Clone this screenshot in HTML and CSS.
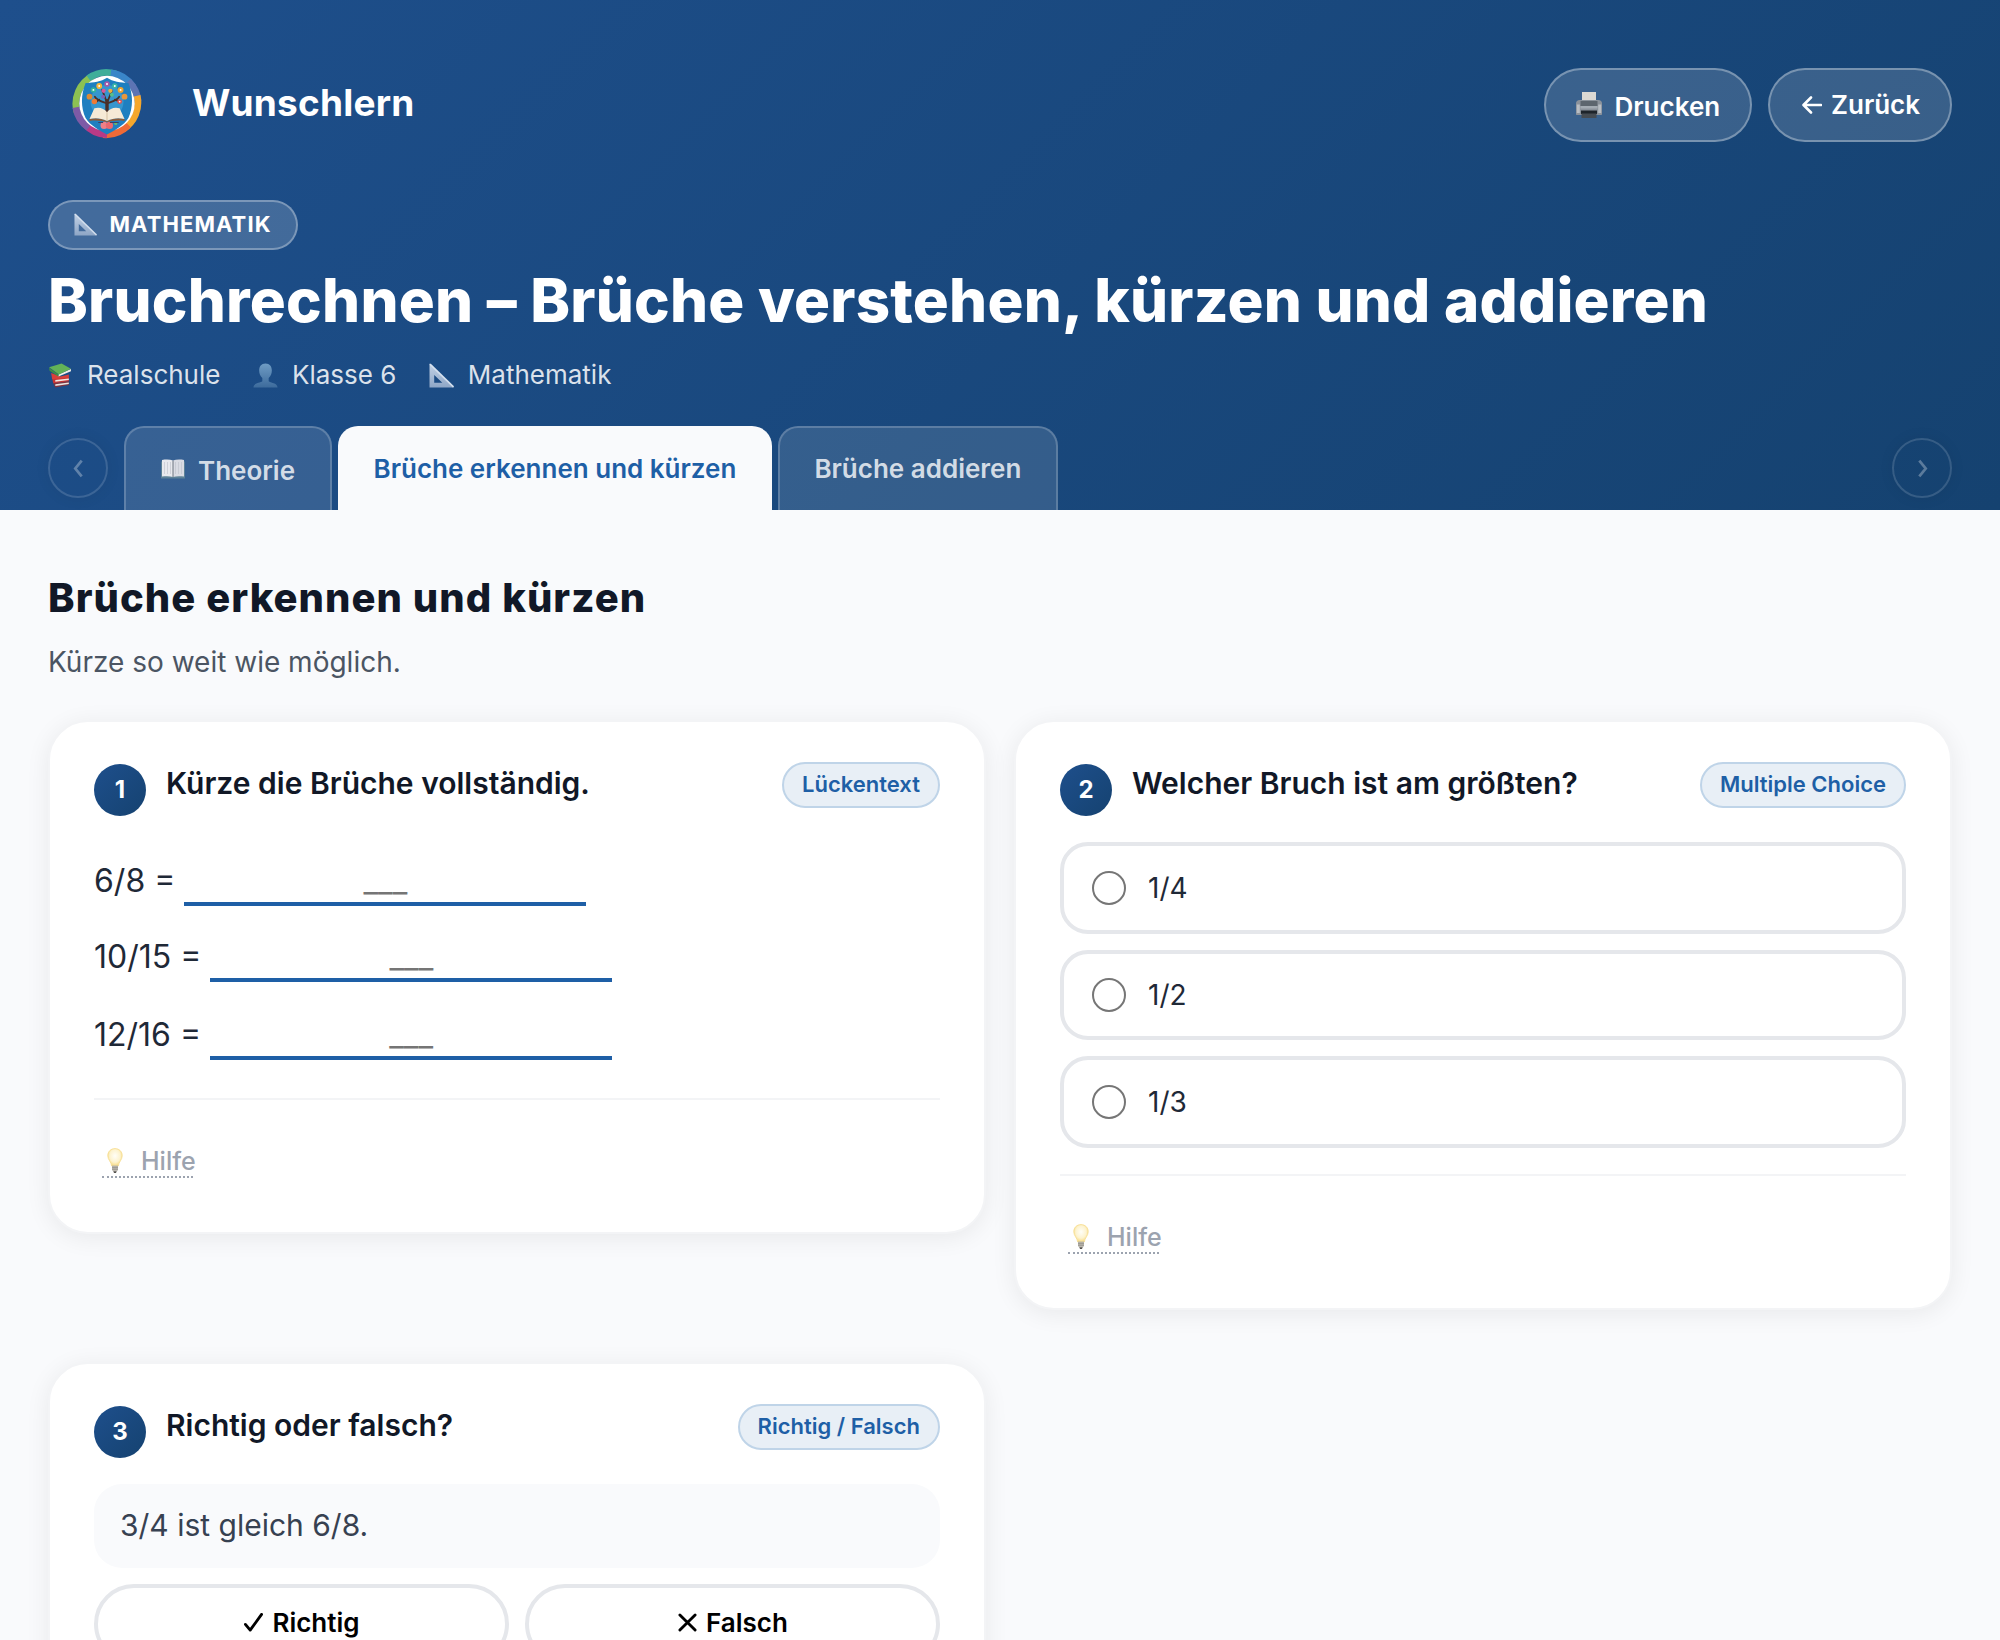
FILE: index.html
```
<!DOCTYPE html>
<html lang="de">
    <head>
        <meta charset="utf-8" />
        <title>Bruchrechnen – Wunschlern</title>
        <meta name="viewport" content="width=device-width, initial-scale=1" />
        <link rel="stylesheet" href="styles.css">
    </head>

    <body>
        <!-- Icons -->
        <svg class="sprite" width="0" height="0">
            <defs>
                <linearGradient id="rulerFill" x1="0" y1="0" x2="0" y2="1">
                    <stop offset="0" stop-color="#c3d2e6" />
                    <stop offset="1" stop-color="#8ea6c6" />
                </linearGradient>
                <linearGradient id="userFill" x1="0" y1="0" x2="0" y2="1">
                    <stop offset="0" stop-color="#6f9cc4" />
                    <stop offset="1" stop-color="#3d6b9c" />
                </linearGradient>
                <radialGradient id="bulbFill" cx=".5" cy=".42" r=".6">
                    <stop offset="0" stop-color="#fffef8" />
                    <stop offset=".6" stop-color="#fdf3cf" />
                    <stop offset="1" stop-color="#f6d778" />
                </radialGradient>
            </defs>
            <symbol id="ruler" viewBox="0 0 24 24">
                <path fill="url(#rulerFill)" fill-rule="evenodd" d="M0.5 0.5 L24 23.5 H0.5 Z M5 11.5 V19 H12.8 Z" />
                <path d="M1 1 L23.5 23" stroke="#d5e0ee" stroke-width="1.6" />
            </symbol>
            <symbol id="user" viewBox="0 0 26 26">
                <path fill="url(#userFill)" d="M13 0.5c4.4 0 6.6 3.2 6.6 7.4 0 3-1.200 6-3.300 7.800v3.300c1.400 1.700 9.200 1.500 9.200 6.500H.5c0-5 7.800-4.800 9.200-6.500v-3.300C7.600 13.900 6.400 10.900 6.400 7.900 6.400 3.700 8.600.5 13 .5z" />
            </symbol>
            <symbol id="books" viewBox="0 0 24 24">
                <path fill="#7d3340" d="M5 19.500 20 17.500v3.500L7 23.500z" />
                <path fill="#e8e4e0" d="M7 20.500 20 18.600v1.600L7 22z" />
                <path fill="#c93634" d="M4 14.500 20 13v4.500L5 19.500z" />
                <path fill="#efe9e2" d="M7 16.300 20 14.800v1.600L7 18z" />
                <path fill="#d8403a" d="M3 9.500 12 13l8-2v3L4 15.500z" />
                <path fill="#f1efe6" d="M10 11 22 5.800v2L10 13z" />
                <path fill="#3f8f43" d="M1 4.500 10 11v2L1.500 7.500z" />
                <path fill="#62b257" d="M1 4 13 .5 22 5.500 10.500 11z" />
            </symbol>
            <symbol id="book" viewBox="0 0 24 20">
                <path fill="#5c8197" d="M0 2.500h24V19.500H0z" />
                <path fill="#e8e9ee" d="M1 1c4-.6 8-.6 11 .5V18C9 17 5 17 1 17.500z" />
                <path fill="#d9dbe3" d="M23 1c-4-.6-8-.6-11 .5V18c3-1 7-1 11-.5z" />
                <path stroke="#6d7480" stroke-width="1" d="M12 1.500V18" />
                <path stroke="#b9bdc9" stroke-width="1" d="M3.500 3v12M6.500 3v12M9.500 3v12M14.500 3v12M17.500 3v12M20.500 3v12" opacity=".55" />
            </symbol>
            <symbol id="printer" viewBox="0 0 26 26">
                <path fill="#dcd9d3" d="M6 0h14v9H6z" />
                <path fill="#8b929b" d="M3.500 8h19c2 0 3.500 1.500 3.500 3.500V22c0 .6-.4 1-1 1H1c-.6 0-1-.4-1-1V11.500C0 9.500 1.500 8 3.500 8z" />
                <path fill="#5d656e" d="M4.500 9h17v5h-17z" />
                <path fill="#b9bec4" d="M.8 12.500h3V21h-3zM22.200 12.500h3V21h-3z" />
                <path fill="#a4abb3" d="M4.500 14h17v2.500h-17z" />
                <path fill="#1e242b" d="M5 18.500h16V22H5z" />
                <path fill="#454b52" d="M5.500 21.500h15V26h-15z" />
            </symbol>
            <symbol id="bulb" viewBox="0 0 16 25">
                <path fill="url(#bulbFill)" stroke="#f6dc8c" stroke-width=".8" d="M8 .6c4.200 0 7.200 3 7.200 7 0 4.400-3.400 6-3.900 10.400H4.700C4.200 13.600.8 12 .8 7.600c0-4 3-7 7.200-7z" />
                <path fill="#bdb9b0" d="M5 17.500h6v4.500L9.800 23.500H6.200L5 22z" />
                <path stroke="#8d8a84" stroke-width=".8" d="M5 19.300h6M5 21.200h6" />
                <path fill="#55524e" d="M6.300 23.200h3.400L9 25H7z" />
            </symbol>
        </svg>

        <header class="header">
            <div class="topbar">
                <a class="brand">
                    <svg class="logo" viewBox="0 0 72 72">
                        <g fill="none" stroke-width="7">
                            <path stroke="#8cc152" d="M5.500 46A32 32 0 0 1 22 7.500" />
                            <path stroke="#3fae9a" d="M17 10A32 32 0 0 1 45 5.500" />
                            <path stroke="#3a86c8" d="M40 4.500A32 32 0 0 1 63 19" />
                            <path stroke="#5d74b4" d="M58 13A32 32 0 0 1 68 34" />
                            <path stroke="#f5a72c" d="M67 28A32 32 0 0 1 53 62" />
                            <path stroke="#ef6a36" d="M58 58A32 32 0 0 1 32 68" />
                            <path stroke="#b83a86" d="M36 68A32 32 0 0 1 13 57" />
                            <path stroke="#7d5aa6" d="M17 61A32 32 0 0 1 4 40" />
                        </g>
                        <circle cx="36" cy="36" r="28.500" fill="#fff" />
                        <path fill="#1e7fc0" d="M36 9.500c6 4 14 5 22 5.500 5 12 5 25 0 36-5 8-13 12-22 17-9-5-17-9-22-17-5-11-5-24 0-36 8-.5 16-1.500 22-5.500z" />
                        <circle cx="36" cy="34" r="17" fill="#4aa9d8" opacity=".55" />
                        <g fill="none" stroke="#4a2f28" stroke-linecap="round">
                            <path stroke-width="3.500" d="M36 46V33" />
                            <path stroke-width="1.800" d="M36 36C31 34 26 33 23.500 29M36 36c5-2 10-3 12.500-7M35.500 34 31 22M36.500 34 41 23M28 32l-4 3M44 32l5 2" />
                        </g>
                        <g>
                            <circle cx="28" cy="18" r="3" fill="#f6b63a" />
                            <circle cx="36" cy="16" r="2.800" fill="#a857a8" />
                            <circle cx="44" cy="18" r="2.800" fill="#3ab5a5" />
                            <circle cx="22" cy="22" r="2.800" fill="#35b39a" />
                            <circle cx="50" cy="22" r="3" fill="#f0a52f" />
                            <circle cx="18" cy="29" r="3" fill="#d98a35" />
                            <circle cx="54" cy="29" r="3" fill="#e8963a" />
                            <circle cx="23" cy="34" r="2.800" fill="#ee7b35" />
                            <circle cx="49" cy="34" r="2.500" fill="#e5504c" />
                            <circle cx="32.500" cy="23" r="2.200" fill="#d8589c" />
                            <circle cx="39.500" cy="23" r="2.200" fill="#efae3c" />
                            <circle cx="32" cy="29" r="2" fill="#7a62b8" />
                            <circle cx="41" cy="27" r="2" fill="#56bf8b" />
                        </g>
                        <g fill="#fff">
                            <circle cx="28" cy="18" r="1" />
                            <circle cx="36" cy="16" r="1" />
                            <circle cx="44" cy="18" r="1" />
                            <circle cx="22" cy="22" r="1" />
                            <circle cx="50" cy="22" r="1" />
                            <circle cx="49" cy="34" r=".9" />
                        </g>
                        <path fill="#8a5c3a" d="M18 52c6-1.500 12-1 18 2 6-3 12-3.500 18-2v2c-6-1-12-.5-18 1-6-1.500-12-2-18-1z" />
                        <path fill="#f6ead6" d="M23 41c5-1.500 10 0 13 4 3-4 8-5.500 13-4l5 11c-6-1.500-12-1-18 2-6-3-12-3.500-18-2z" />
                        <path stroke="#cbb391" stroke-width=".8" d="M36 45v9" />
                        <circle cx="33" cy="58.500" r="3.700" fill="#ef7f87" />
                        <circle cx="38.500" cy="58.500" r="3.700" fill="#e9686f" />
                        <circle cx="45" cy="56.500" r="1.600" fill="#6cb668" />
                        <path stroke="#3a3f66" stroke-width="1.200" d="M27 55.500h5M39 55.500h9" />
                    </svg>
                    <span class="brand-name">Wunschlern</span>
                </a>
                <div class="actions">
                    <button class="btn btn-print"><svg class="i-printer"><use href="#printer" /></svg><span>Drucken</span></button>
                    <button class="btn btn-back">
                        <svg class="i-back" viewBox="0 0 20 18"><path d="M9 1.500 1.500 9 9 16.500M2 9h17" /></svg><span>Zurück</span>
                    </button>
                </div>
            </div>

            <div class="subject"><svg class="i-ruler"><use href="#ruler" /></svg><span>MATHEMATIK</span></div>
            <h1 class="title">Bruchrechnen – Brüche verstehen, kürzen und addieren</h1>
            <ul class="meta">
                <li><svg class="i-meta"><use href="#books" /></svg>Realschule</li>
                <li><svg class="i-meta"><use href="#user" /></svg>Klasse 6</li>
                <li><svg class="i-meta"><use href="#ruler" /></svg>Mathematik</li>
            </ul>

            <div class="tabs">
                <button class="arrow"><svg viewBox="0 0 12 20"><path d="M9.500 1.500 2.500 10l7 8.500" /></svg></button>
                <nav class="tab-list">
                    <button class="tab tab-theory"><svg class="i-book"><use href="#book" /></svg><span>Theorie</span></button>
                    <button class="tab active">Brüche erkennen und kürzen</button>
                    <button class="tab">Brüche addieren</button>
                </nav>
                <button class="arrow"><svg viewBox="0 0 12 20"><path d="M2.500 1.500 9.500 10l-7 8.500" /></svg></button>
            </div>
        </header>

        <main class="content">
            <h2 class="section-title">Brüche erkennen und kürzen</h2>
            <p class="section-text">Kürze so weit wie möglich.</p>

            <div class="cards">
                <section class="card">
                    <div class="card-head">
                        <span class="num">1</span>
                        <h3>Kürze die Brüche vollständig.</h3>
                        <span class="tag">Lückentext</span>
                    </div>
                    <div class="blanks">
                        <label class="blank">6/8 = <input type="text" placeholder="___" /></label>
                        <label class="blank">10/15 = <input type="text" placeholder="___" /></label>
                        <label class="blank">12/16 = <input type="text" placeholder="___" /></label>
                    </div>
                    <div class="card-foot">
                        <a class="help"><svg class="i-bulb"><use href="#bulb" /></svg><span>Hilfe</span></a>
                    </div>
                </section>

                <section class="card">
                    <div class="card-head">
                        <span class="num">2</span>
                        <h3>Welcher Bruch ist am größten?</h3>
                        <span class="tag">Multiple Choice</span>
                    </div>
                    <div class="options">
                        <label class="option"><span class="radio"></span>1/4</label>
                        <label class="option"><span class="radio"></span>1/2</label>
                        <label class="option"><span class="radio"></span>1/3</label>
                    </div>
                    <div class="card-foot">
                        <a class="help"><svg class="i-bulb"><use href="#bulb" /></svg><span>Hilfe</span></a>
                    </div>
                </section>

                <section class="card">
                    <div class="card-head">
                        <span class="num">3</span>
                        <h3>Richtig oder falsch?</h3>
                        <span class="tag">Richtig / Falsch</span>
                    </div>
                    <p class="statement">3/4 ist gleich 6/8.</p>
                    <div class="choice">
                        <button><svg viewBox="0 0 20 20"><path d="M1.500 12 6.500 18 18.500 1.500" /></svg>Richtig</button>
                        <button><svg viewBox="0 0 20 20"><path d="M2 2 18 18M18 2 2 18" /></svg>Falsch</button>
                    </div>
                </section>
            </div>
        </main>
    </body>
</html>
```
FILE: styles.css
```
* {
    box-sizing: border-box;
    margin: 0;
    padding: 0;
}
html,
body {
    height: 1640px;
    overflow: hidden;
}
body {
    background: #f9fafc;
    color: #111827;
    font-family: Inter, "Liberation Sans", sans-serif;
}
button,
input {
    font: inherit;
    border: 0;
    background: none;
}
li {
    list-style: none;
}
svg {
    display: block;
    flex: none;
    fill: none;
}
.sprite {
    position: absolute;
}

/* header */
.header {
    height: 510px;
    padding: 68px 48px 0;
    color: #fff;
    background: linear-gradient(135deg, #1e4f8c 0%, #154270 100%);
}
.topbar {
    display: flex;
    justify-content: space-between;
    height: 74px;
}
.brand {
    display: flex;
    align-items: flex-start;
    padding-left: 24px;
}
.logo {
    width: 70px;
    height: 71px;
}
.brand-name {
    margin: 13px 0 0 50px;
    font-size: 37px;
    font-weight: 700;
    line-height: 44px;
    letter-spacing: .200px;
}
.actions {
    display: flex;
    gap: 16px;
}
.btn {
    display: flex;
    align-items: center;
    height: 74px;
    border: 2px solid rgba(255, 255, 255, .32);
    border-radius: 37px;
    background: rgba(255, 255, 255, .15);
    color: #fff;
    font-size: 26px;
    font-weight: 600;
    line-height: 32px;
}
.btn-print {
    width: 208px;
    padding-left: 30px;
    gap: 12.500px;
}
.btn-print span {
    padding-top: 4px;
}
.btn-back {
    width: 184px;
    padding-left: 32px;
    gap: 9px;
}
.i-printer {
    width: 26px;
    height: 26px;
}
.i-back {
    width: 20px;
    height: 18px;
    stroke: #fff;
    stroke-width: 2.600;
    stroke-linecap: round;
    stroke-linejoin: round;
}

.subject {
    display: flex;
    align-items: center;
    width: 250px;
    height: 50px;
    margin-top: 58px;
    padding-left: 24px;
    gap: 12.500px;
    border: 2px solid rgba(255, 255, 255, .3);
    border-radius: 25px;
    background: rgba(255, 255, 255, .17);
    font-size: 22px;
    font-weight: 700;
    line-height: 28px;
    letter-spacing: 1.100px;
}
.subject span {
    padding-bottom: 2px;
}
.i-ruler {
    width: 23px;
    height: 23px;
    margin-top: -2px;
}
.title {
    margin-top: 17px;
    font-size: 60px;
    font-weight: 800;
    line-height: 66px;
    letter-spacing: .220px;
    white-space: nowrap;
}
.meta {
    display: flex;
    margin-top: 25px;
    gap: 32.500px;
    color: rgba(255, 255, 255, .85);
    font-size: 26px;
    line-height: 34px;
}
.meta li {
    display: flex;
    align-items: center;
    gap: 14px;
}
.i-meta {
    width: 25px;
    height: 25px;
}

/* tabs */
.tabs {
    display: flex;
    margin-top: 34px;
    height: 84px;
}
.arrow {
    display: flex;
    align-items: center;
    justify-content: center;
    width: 60px;
    height: 60px;
    margin-top: 12px;
    border: 2px solid rgba(255, 255, 255, .14);
    border-radius: 50%;
    box-shadow: 0 0 16px rgba(0, 0, 0, .06);
}
.arrow svg {
    width: 11px;
    height: 19px;
    stroke: rgba(255, 255, 255, .3);
    stroke-width: 3;
}
.tab-list {
    display: flex;
    flex: 1;
    gap: 6px;
    padding-left: 16px;
}
.tab {
    display: flex;
    align-items: center;
    padding: 0 34.500px;
    border: 2px solid rgba(255, 255, 255, .2);
    border-bottom: 0;
    border-radius: 20px 20px 0 0;
    background: rgba(255, 255, 255, .12);
    color: rgba(255, 255, 255, .8);
    font-size: 26px;
    font-weight: 600;
    line-height: 32px;
}
.tab-theory {
    width: 208px;
    padding-left: 35px;
    gap: 13px;
}
.tab-theory span {
    padding-top: 4px;
}
.tab.active {
    padding: 0 33.500px;
    border-color: #f9fafc;
    background: #f9fafc;
    color: #1e5fa6;
}
.i-book {
    width: 24px;
    height: 20px;
}

/* content */
.content {
    padding: 64px 48px;
}
.section-title {
    font-size: 40px;
    font-weight: 800;
    line-height: 48px;
    letter-spacing: 1.050px;
}
.section-text {
    margin-top: 19px;
    color: #4b5563;
    font-size: 28px;
    line-height: 42px;
}
.cards {
    display: grid;
    grid-template-columns: 1fr 1fr;
    align-items: start;
    gap: 52px 28px;
    margin-top: 37px;
}
.card {
    padding: 40px 44px;
    border: 2px solid #f3f4f6;
    border-radius: 40px;
    background: #fff;
    box-shadow: 0 4px 24px rgba(0, 0, 0, .07);
}
.card-head {
    display: flex;
    align-items: flex-start;
    height: 54px;
}
.num {
    width: 52px;
    height: 52px;
    margin-top: 2px;
    border-radius: 50%;
    background: linear-gradient(135deg, #1e4f8c 0%, #154270 100%);
    color: #fff;
    font-size: 24px;
    font-weight: 700;
    line-height: 51px;
    text-align: center;
}
.card-head h3 {
    flex: 1;
    margin-left: 20px;
    font-size: 30px;
    font-weight: 600;
    line-height: 42px;
}
.tag {
    height: 46px;
    padding: 0 18px;
    border: 2px solid #bfd4e8;
    border-radius: 23px;
    background: #e8eff6;
    color: #1e5fa6;
    font-size: 22px;
    font-weight: 600;
    line-height: 40px;
}

.blanks {
    padding-top: 14px;
    height: 282px;
    color: #1f2937;
    font-size: 32px;
    line-height: 40px;
}
.blank {
    display: flex;
    align-items: baseline;
    gap: 9px;
    height: 76px;
    padding-top: 24px;
}
.blank:nth-child(2) {
    height: 78px;
}
.blank input {
    width: 402px;
    height: 52px;
    padding-top: 4px;
    border-bottom: 4px solid #1e5fa6;
    text-align: center;
}
.blank input::placeholder {
    color: #757575;
}

.options {
    display: flex;
    flex-direction: column;
    gap: 16px;
    padding: 26px 0;
}
.option {
    display: flex;
    align-items: center;
    height: 92px;
    padding: 0 0 1px 28px;
    gap: 22px;
    border: 4px solid #e5e7eb;
    border-radius: 28px;
    color: #1f2937;
    font-size: 28px;
}
.option:nth-child(2) {
    height: 90px;
    padding-bottom: 0;
}
.radio {
    width: 34px;
    height: 34px;
    border: 2px solid #767676;
    border-radius: 50%;
}

.card-foot {
    height: 94px;
    padding: 42px 8px 0;
    border-top: 2px solid #f3f4f6;
}
.help {
    display: inline-flex;
    align-items: center;
    width: 91px;
    height: 36px;
    padding: 3px 0 0 5px;
    gap: 18px;
    border-bottom: 2px dotted #9ca3af;
    color: #9ca3af;
    font-size: 25px;
    font-weight: 500;
}
.i-bulb {
    width: 16px;
    height: 25px;
}

.statement {
    height: 84px;
    margin-top: 26px;
    padding-left: 26px;
    border-radius: 28px;
    background: #f9fafc;
    color: #374151;
    font-size: 30px;
    line-height: 82px;
}
.choice {
    display: flex;
    gap: 16px;
    margin-top: 16px;
}
.choice button {
    display: flex;
    flex: 1;
    align-items: center;
    justify-content: center;
    height: 80px;
    padding: 0 0 3px 1px;
    gap: 9px;
    border: 4px solid #e5e7eb;
    border-radius: 40px;
    color: #000;
    font-size: 26px;
    font-weight: 600;
}
.choice svg {
    width: 19px;
    height: 19px;
    stroke: #000;
    stroke-width: 3;
    stroke-linecap: round;
    stroke-linejoin: round;
}
```
